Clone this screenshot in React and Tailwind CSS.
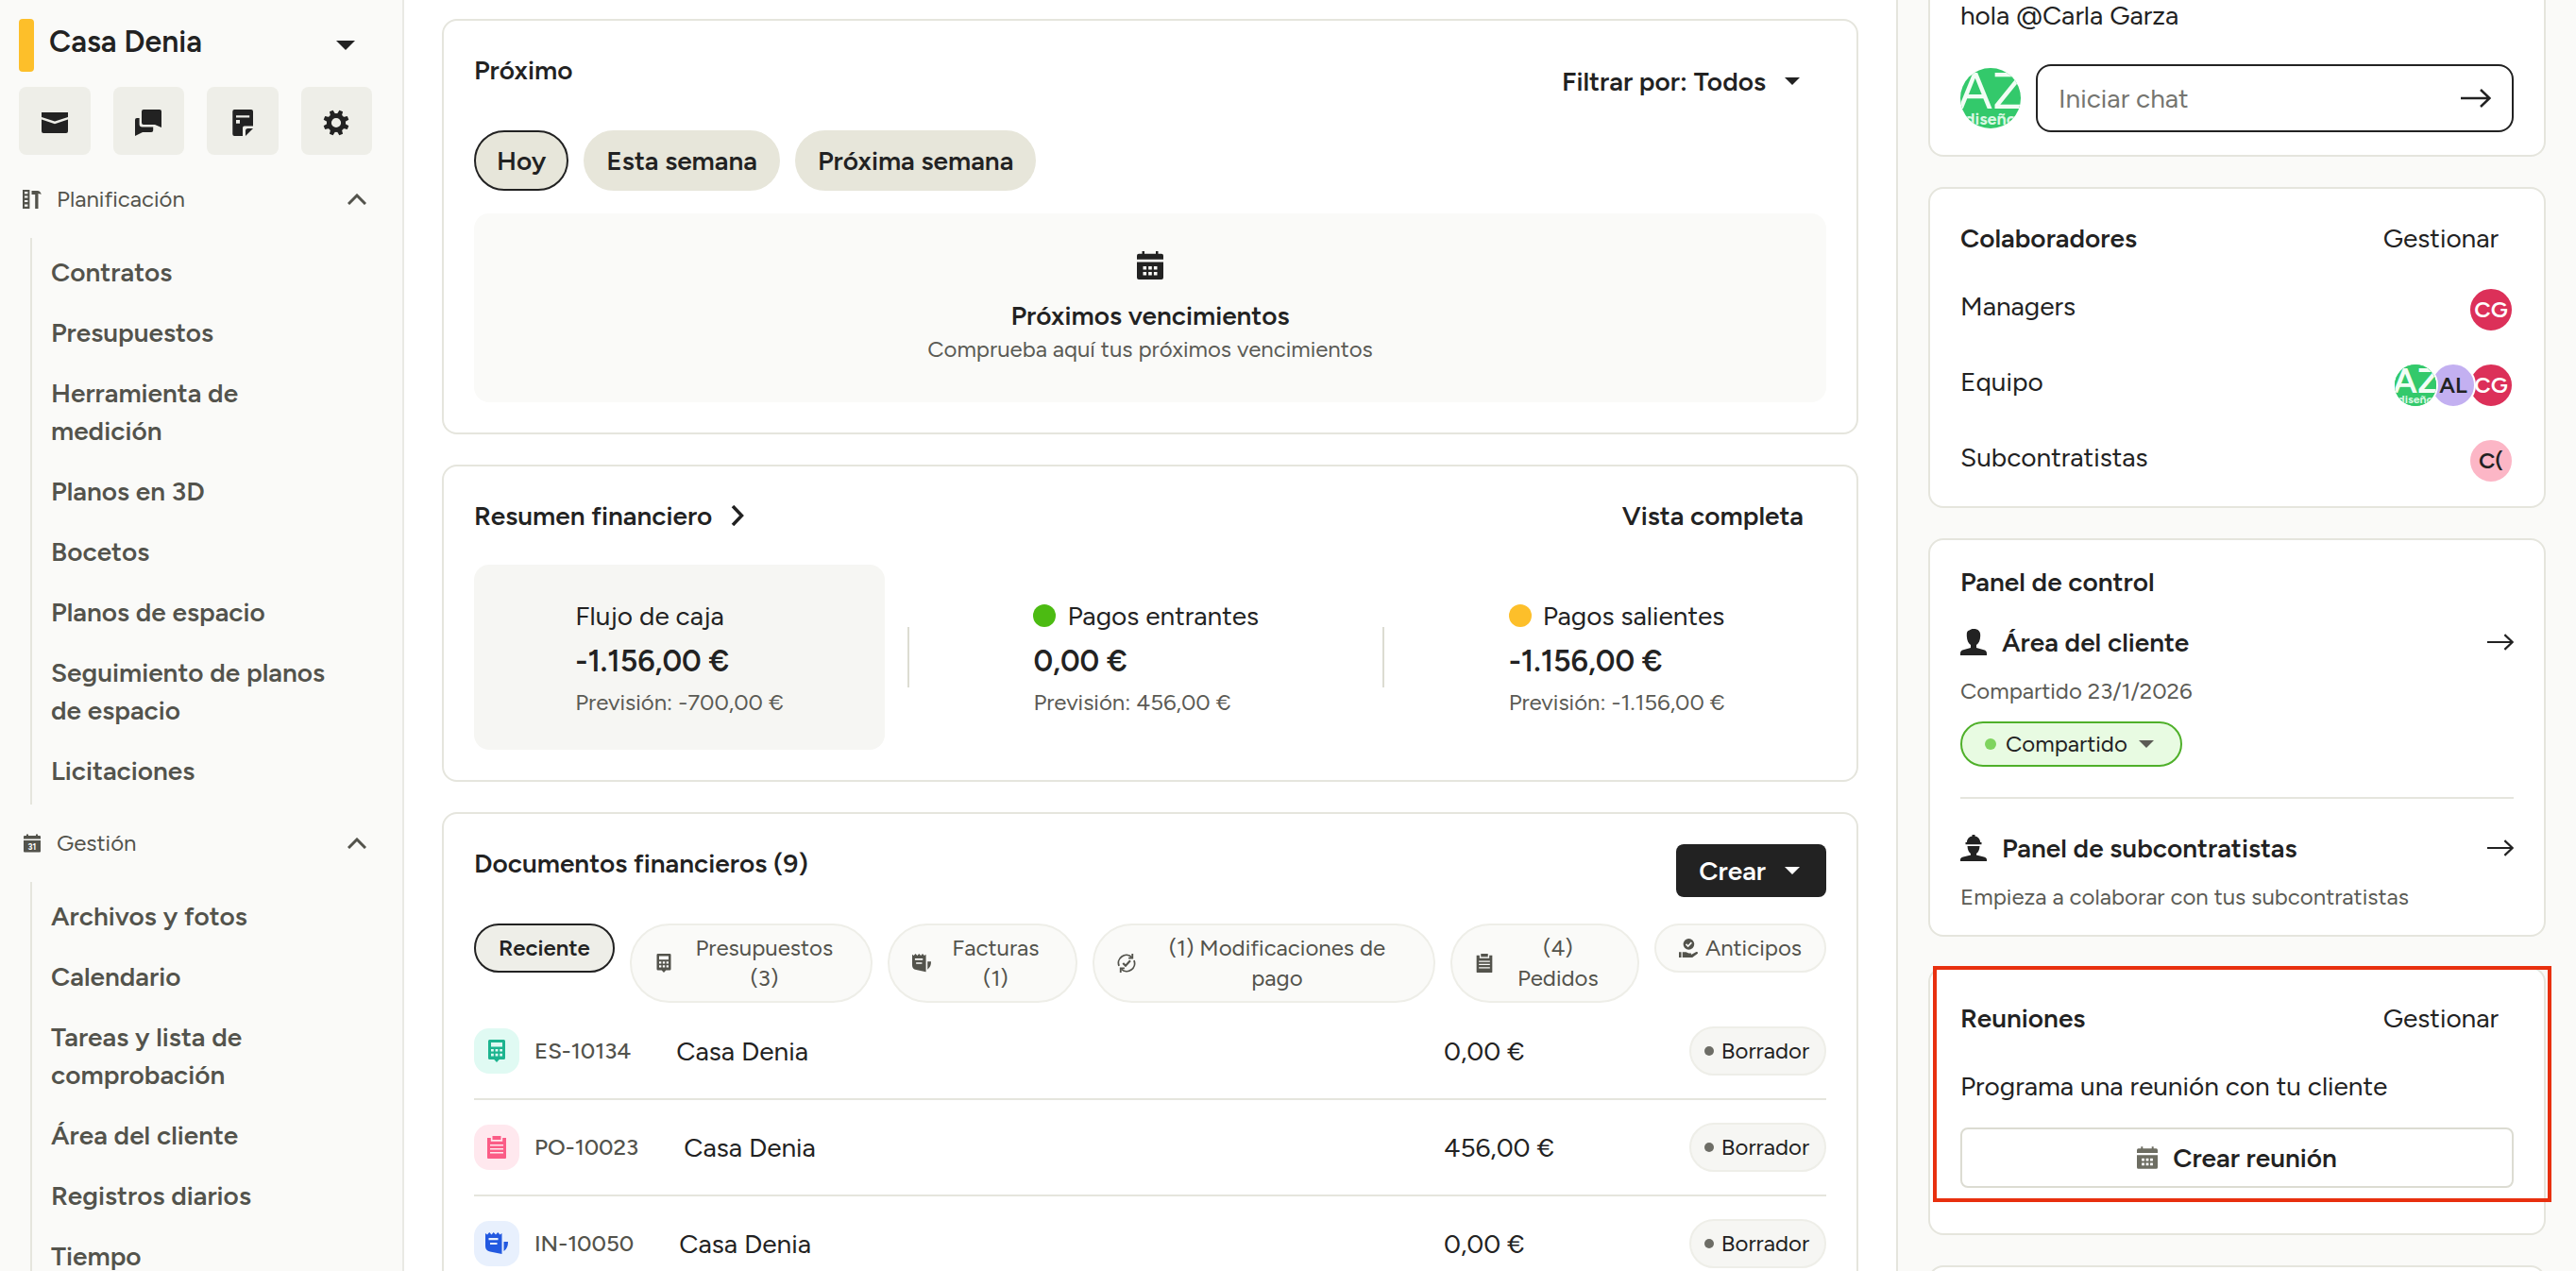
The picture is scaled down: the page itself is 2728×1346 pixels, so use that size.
import clsx from 'clsx';

// ─── Data ─────────────────────────────────────────────────────────────────────

const PLANNING = [
  'Contratos',
  'Presupuestos',
  'Herramienta de medición',
  'Planos en 3D',
  'Bocetos',
  'Planos de espacio',
  'Seguimiento de planos de espacio',
  'Licitaciones',
];

const MANAGEMENT = [
  'Archivos y fotos',
  'Calendario',
  'Tareas y lista de comprobación',
  'Área del cliente',
  'Registros diarios',
  'Tiempo',
];

const FINANCES = [
  { label: 'Flujo de caja', value: '-1.156,00 €', forecast: '-700,00 €', active: true },
  { label: 'Pagos entrantes', value: '0,00 €', forecast: '456,00 €', dot: 'bg-[#4cbb12]' },
  { label: 'Pagos salientes', value: '-1.156,00 €', forecast: '-1.156,00 €', dot: 'bg-[#fdbf2a]' },
];

// ─── Icons ────────────────────────────────────────────────────────────────────

const MailIcon = () => (
  <svg viewBox="0 0 28 28" className="size-7" fill="currentColor">
    <path d="M0 3h28v5l-14 4.4L0 8z" />
    <path d="M0 10.6l14 4.6 14-4.6V23a2 2 0 0 1-2 2H2a2 2 0 0 1-2-2z" />
  </svg>
);

const ChatIcon = () => (
  <svg viewBox="0 0 28 28" className="size-7" fill="currentColor">
    <path d="M9 0h17a2 2 0 0 1 2 2v17l-7-3H9a2 2 0 0 1-2-2V2a2 2 0 0 1 2-2z" />
    <path d="M0 28V11a2 2 0 0 1 2-2h2.6v6.4a3 3 0 0 0 3 3h11.6V22a2 2 0 0 1-2 2H8z" />
  </svg>
);

const NoteIcon = () => (
  <svg viewBox="0 0 28 28" className="size-7" fill="currentColor">
    <path
      fillRule="evenodd"
      d="M5.3 0H23a2 2 0 0 1 2 2v15.6h-9.2a1.8 1.8 0 0 0-1.8 1.8V28H5.3a2 2 0 0 1-2-2V2a2 2 0 0 1 2-2zM7 6.2v2.2h14.2V6.2zM7 11v3.8h4V11z"
    />
    <path d="M17 28v-5.4a2.6 2.6 0 0 1 2.6-2.6H25z" />
  </svg>
);

const GearIcon = () => (
  <svg viewBox="0 0 28 28" className="size-7" fill="currentColor">
    <circle cx="14" cy="14" r="7.6" fill="none" stroke="currentColor" strokeWidth="5" />
    {[22.5, 67.5, 112.5, 157.5, 202.5, 247.5, 292.5, 337.5].map((angle) => (
      <path key={angle} d="M11.2 6L12 .4h4L16.800 6z" transform={`rotate(${angle} 14 14)`} />
    ))}
  </svg>
);

const ToolsIcon = () => (
  <svg viewBox="0 0 20 20" className="size-5" fill="currentColor">
    <path
      fillRule="evenodd"
      d="M0 0h7.400v20H0zM2 2v2.200h3.400V2zM2 6.400v2.200h3.400V6.400zM2 10.900v2.200h3.400v-2.200zM2 15.500v2.200h3.400v-2.200z"
    />
    <path d="M9.500 1h6.200c2 0 3.400 1.400 4.100 3.700l-3.300-.8V20h-3.300V5H9.500z" />
  </svg>
);

const DateIcon = () => (
  <svg viewBox="0 0 20 20" className="size-5" fill="currentColor">
    <path d="M1 3a1 1 0 0 1 1-1h2V.5h2V2h8V.5h2V2h2a1 1 0 0 1 1 1v2.500H1z" />
    <path d="M1 7h18v11.500a1 1 0 0 1-1 1H2a1 1 0 0 1-1-1z" />
    <text x="10" y="16.500" textAnchor="middle" fontSize="9" fontWeight="700" fill="#fafaf8">31</text>
  </svg>
);

const CalendarIcon = ({ className }) => (
  <svg viewBox="0 0 28 30" className={className} fill="currentColor">
    <path d="M0 4.700a2 2 0 0 1 2-2h3.500V0H8v2.700h12V0h2.500v2.700H26a2 2 0 0 1 2 2v4H0z" />
    <path
      fillRule="evenodd"
      d="M0 11.600h28V28a2 2 0 0 1-2 2H2a2 2 0 0 1-2-2zM6.500 16v3.400h3.600V16zM12.200 16v3.400h3.600V16zM17.900 16v3.400h3.600V16zM6.500 22v3.400h3.600V22zM12.200 22v3.400h3.600V22zM17.900 22v3.400h3.600V22z"
    />
  </svg>
);

const CalculatorIcon = ({ className }) => (
  <svg viewBox="0 0 24 24" className={className} fill="currentColor">
    <path
      fillRule="evenodd"
      d="M4.500 0h15a1.500 1.500 0 0 1 1.500 1.500v18a1.500 1.500 0 0 1-1.500 1.500h-4.700L12 24l-2.800-3H4.500A1.500 1.500 0 0 1 3 19.500v-18A1.500 1.500 0 0 1 4.500 0zM6 3v4.500h12V3zM6 10v2.600h2.800V10zM10.600 10v2.600h2.800V10zM15.200 10v2.600H18V10zM6 14.800v2.600h2.800v-2.600zM10.600 14.800v2.600h2.800v-2.600zM15.200 14.800v2.600H18v-2.600z"
    />
  </svg>
);

const InvoiceIcon = ({ className }) => (
  <svg viewBox="0 0 24 24" className={className} fill="currentColor">
    <path
      fillRule="evenodd"
      d="M0 1l2 1.500L4.200 0l2.300 2.500L8.700 0 11 2.500 13.200 0l2.300 2.500L17.500 1v22L5 20.500a6 6 0 0 1-5-6zM3.500 6v2.200h10V6zM5 11v2h7.500v-2z"
    />
    <path d="M19.500 10H24c0 4-1 7.500-4.500 10z" />
  </svg>
);

const ClipboardIcon = ({ className }) => (
  <svg viewBox="0 0 24 24" className={className} fill="currentColor">
    <path d="M7.500 0h9v4h-9z" />
    <path
      fillRule="evenodd"
      d="M2 2h3.800v3.700h12.400V2H22v21a1 1 0 0 1-1 1H3a1 1 0 0 1-1-1zM5 9v1.500h14V9zM5 13v1.500h14V13zM5 17v1.500h14V17z"
    />
  </svg>
);

const RefreshCheckIcon = ({ className }) => (
  <svg viewBox="0 0 24 24" className={className} fill="none" stroke="currentColor" strokeWidth="2.200">
    <path d="M2.500 15.500A10 10 0 0 1 18.500 4.300M21.500 8.500A10 10 0 0 1 5.500 19.700" />
    <path d="M19.500 0v5.500h-5M4.500 24v-5.500h5" />
    <path d="M7.500 12l3.300 3.300 6-6.500" strokeWidth="2.600" />
  </svg>
);

const DepositIcon = ({ className }) => (
  <svg viewBox="0 0 24 24" className={className} fill="currentColor">
    <circle cx="12.500" cy="7" r="7" />
    <path d="M9 7l2.600 2.600L16 5" fill="none" stroke="#fafaf8" strokeWidth="2" />
    <path d="M0 17h3v7H0zM4.500 17H9l3.500 1.500h3v2l6-3.500c2-.8 3.300.8 2 2.200L17 24H4.500z" />
  </svg>
);

const PersonIcon = () => (
  <svg viewBox="0 0 28 28" className="size-7" fill="currentColor">
    <path d="M14 0c5 0 7.500 2.600 7.200 7.500C21 12 19.500 15.500 17 17v3l8 2.200c2.200.6 3 2 3 4V28H0v-1.800c0-2 .8-3.400 3-4L11 20v-3C8.500 15.500 7 12 6.800 7.500 6.600 3.500 7.500 1.800 9.500 1.600 10.500.6 12 0 14 0z" />
  </svg>
);

const BuilderIcon = () => (
  <svg viewBox="0 0 28 28" className="size-7" fill="currentColor">
    <path d="M12.500 0h3v1.500c3.500.7 5.500 3.200 5.700 6.500h1.300v2.200h-17V8h1.300c.2-3.300 2.200-5.800 5.700-6.500z" />
    <path d="M7.500 12h13c-.2 4-1.500 6.500-3.500 8v1.500l8 2c2.200.6 3 1.500 3 3V28H0v-1.500c0-1.500.8-2.400 3-3l8-2V20c-2-1.500-3.300-4-3.500-8z" />
  </svg>
);

const Caret = ({ className }) => (
  <svg viewBox="0 0 16 8" className={className} fill="currentColor">
    <path d="M0 0h16L8 8z" />
  </svg>
);

const ChevronUp = () => (
  <svg viewBox="0 0 20 12" className="h-3 w-5 shrink-0" fill="none" stroke="currentColor" strokeWidth="3">
    <path d="M1 11l9-9 9 9" />
  </svg>
);

const Arrow = ({ className }) => (
  <svg viewBox="0 0 32 20" className={className} fill="none" stroke="currentColor" strokeWidth="2.500">
    <path d="M0 10h30M21 1l9.500 9-9.500 9" />
  </svg>
);

const StudioLogo = ({ className }) => (
  <svg viewBox="0 0 64 64" className={className}>
    <rect width="64" height="64" fill="#33c96b" />
    <text x="33" y="43" textAnchor="middle" fontSize="54" fill="#f2fdf5">AZ</text>
    <text x="32" y="60" textAnchor="middle" fontSize="18" fontWeight="700" fill="#d8f7e2">diseño</text>
  </svg>
);

// ─── Shared pieces ────────────────────────────────────────────────────────────

const Card = ({ className, children }) => (
  <section className={clsx('rounded-2xl border-2 border-[#e5e5dd] bg-white px-8', className)}>
    {children}
  </section>
);

const CardTitle = ({ children }) => <h2 className="text-[28px] leading-10 font-semibold">{children}</h2>;

const Avatar = ({ initials, className }) => (
  <span
    className={clsx(
      'relative flex size-12 items-center justify-center overflow-hidden rounded-full border-2 border-white text-2xl font-semibold',
      className
    )}
  >
    {initials ?? <StudioLogo className="size-11 shrink-0" />}
  </span>
);

// ─── Sidebar ──────────────────────────────────────────────────────────────────

const NavSection = ({ icon, title, items }) => (
  <div className="text-[#53534c]">
    <button className="flex h-[82px] w-full items-center pr-1.5 pl-1 text-left text-2xl">
      {icon}
      <span className="ml-4 flex-1">{title}</span>
      <ChevronUp />
    </button>
    <ul className="ml-3 border-l-2 border-[#e5e5dd] py-1">
      {items.map((item) => (
        <li key={item}>
          <a href="#" className="block py-3 pr-8 pl-5 text-[28px] leading-10 font-semibold">
            {item}
          </a>
        </li>
      ))}
    </ul>
  </div>
);

const Sidebar = () => (
  <nav className="w-[428px] shrink-0 overflow-hidden border-r-2 border-[#e9e9e4] bg-[#fafaf8] pt-5 pr-8 pl-5">
    <button className="flex w-full items-center pr-[18px] text-left">
      <span className="h-14 w-4 rounded-sm bg-[#fdbf2a]" />
      <span className="ml-4 flex-1 pb-2 text-[32px] leading-10 font-semibold">Casa Denia</span>
      <Caret className="h-2.5 w-5" />
    </button>
    <div className="mt-4 mb-1.5 grid grid-cols-4 gap-6">
      {[MailIcon, ChatIcon, NoteIcon, GearIcon].map((Icon, i) => (
        <button key={i} className="flex h-[72px] items-center justify-center rounded-lg bg-[#eeeee8] pt-1">
          <Icon />
        </button>
      ))}
    </div>
    <NavSection icon={<ToolsIcon />} title="Planificación" items={PLANNING} />
    <NavSection icon={<DateIcon />} title="Gestión" items={MANAGEMENT} />
  </nav>
);

// ─── Main column ──────────────────────────────────────────────────────────────

const Upcoming = () => (
  <Card className="pt-8 pb-8">
    <div className="flex items-start justify-between">
      <CardTitle>Próximo</CardTitle>
      <button className="mt-1 flex h-14 items-center gap-5 pr-7 text-[28px] font-semibold">
        Filtrar por: Todos
        <Caret className="h-2 w-4" />
      </button>
    </div>
    <div className="mt-6 flex gap-4">
      {['Hoy', 'Esta semana', 'Próxima semana'].map((label, i) => (
        <button
          key={label}
          className={clsx(
            'h-16 rounded-full border-2 bg-[#e7e6da] px-[22px] text-[28px] font-semibold',
            i === 0 ? 'border-[#222]' : 'border-[#e7e6da]'
          )}
        >
          {label}
        </button>
      ))}
    </div>
    <div className="mt-6 flex h-[200px] flex-col items-center rounded-2xl bg-[#fafaf8] pt-10">
      <CalendarIcon className="h-[30px] w-7" />
      <p className="mt-5 text-[28px] leading-9 font-semibold">Próximos vencimientos</p>
      <p className="text-2xl leading-9 text-[#5b5b55]">Comprueba aquí tus próximos vencimientos</p>
    </div>
  </Card>
);

const FinanceSummary = () => (
  <Card className="pt-8 pb-8">
    <div className="flex items-center justify-between">
      <a href="#" className="flex items-center gap-5">
        <CardTitle>Resumen financiero</CardTitle>
        <svg viewBox="0 0 14 22" className="h-[22px] w-3.5" fill="none" stroke="currentColor" strokeWidth="3.500">
          <path d="M2 1l9.500 10L2 21" />
        </svg>
      </a>
      <a href="#" className="px-6 text-[28px] leading-10 font-semibold">Vista completa</a>
    </div>
    <div className="mt-8 flex items-center">
      {FINANCES.map((item, i) => (
        <div key={item.label} className="contents">
          {i > 0 && <div className="mx-6 h-16 w-0.5 bg-[#dcdcd2]" />}
          <div
            className={clsx(
              'flex h-[196px] flex-auto flex-col items-center justify-center rounded-2xl',
              item.active && 'bg-[#f6f6f3]'
            )}
          >
            <div>
              <p className="flex items-center gap-3 text-[28px] leading-12">
                {item.dot && <span className={clsx('size-6 rounded-full', item.dot)} />}
                {item.label}
              </p>
              <p className="text-[32px] leading-12 font-semibold">{item.value}</p>
              <p className="text-2xl leading-10 text-[#5b5b55]">Previsión: {item.forecast}</p>
            </div>
          </div>
        </div>
      ))}
    </div>
  </Card>
);

const TABS = [
  { icon: CalculatorIcon, lines: ['Presupuestos', '(3)'], width: 'basis-[257px]' },
  { icon: InvoiceIcon, lines: ['Facturas', '(1)'], width: 'basis-[201px]' },
  { icon: RefreshCheckIcon, lines: ['(1) Modificaciones de', 'pago'], width: 'basis-[363px]' },
  { icon: ClipboardIcon, lines: ['(4)', 'Pedidos'], width: 'basis-[200px]' },
  { icon: DepositIcon, lines: ['Anticipos'], width: 'basis-[182px]' },
];

const DOCUMENTS = [
  { code: 'ES-10134', amount: '0,00 €', icon: CalculatorIcon, tile: 'bg-[#e0faf3] text-[#1cb48f]' },
  { code: 'PO-10023', amount: '456,00 €', icon: ClipboardIcon, tile: 'bg-[#ffe8ee] text-[#fb5c86]' },
  { code: 'IN-10050', amount: '0,00 €', icon: InvoiceIcon, tile: 'bg-[#e8f0fd] text-[#2359e0]' },
];

const Documents = () => (
  <Card className="pt-8">
    <div className="flex items-start justify-between">
      <CardTitle>Documentos financieros (9)</CardTitle>
      <button className="flex h-14 items-center gap-5 rounded-lg bg-[#222] pr-7 pl-6 text-[28px] font-semibold text-white">
        Crear
        <Caret className="h-2 w-4" />
      </button>
    </div>
    <div className="mt-7 flex items-start gap-4 text-2xl leading-8">
      <button className="shrink-0 rounded-full border-2 border-[#222] bg-[#eeeee8] px-6 py-2 font-semibold">
        Reciente
      </button>
      {TABS.map(({ icon: Icon, lines, width }) => (
        <button
          key={lines[0]}
          className={clsx(
            'flex grow items-center gap-2 rounded-[42px] border-2 border-[#eeeee8] bg-[#fafaf8] px-6 py-2 text-[#53534c]',
            width
          )}
        >
          <Icon className="size-5 shrink-0" />
          <span className="flex-1 whitespace-nowrap">
            {lines.map((line) => (
              <span key={line} className="block">{line}</span>
            ))}
          </span>
        </button>
      ))}
    </div>
    <table className="w-full table-fixed">
      <tbody>
        {DOCUMENTS.map(({ code, amount, icon: Icon, tile }) => (
          <tr key={code} className="h-[102px] border-b-2 border-[#e5e5dd]">
            <td className="p-0">
              <div className="flex items-center">
                <span className={clsx('flex size-12 items-center justify-center rounded-2xl', tile)}>
                  <Icon className="size-6" />
                </span>
                <a href="#" className="ml-4 text-2xl font-medium text-[#53534c]">{code}</a>
                <span className="ml-12 text-[28px]">Casa Denia</span>
              </div>
            </td>
            <td className="w-[205px] p-0 text-[28px]">{amount}</td>
            <td className="w-[200px] p-0">
              <span className="ml-auto flex h-[52px] w-fit items-center gap-2 rounded-full border-2 border-[#eeeee8] bg-[#f6f6f3] pr-4 pl-3.5 text-2xl">
                <span className="size-2.5 rounded-full bg-[#6d6d66]" />
                Borrador
              </span>
            </td>
          </tr>
        ))}
      </tbody>
    </table>
  </Card>
);

// ─── Right column ─────────────────────────────────────────────────────────────

const Chat = () => (
  <Card className="rounded-t-none border-t-0 pb-6">
    <p className="pb-9 text-[28px] leading-8">hola @Carla Garza</p>
    <form className="flex items-center gap-4">
      <StudioLogo className="size-16 shrink-0 rounded-full" />
      <div className="flex h-[72px] flex-1 items-center rounded-2xl border-2 border-[#222] px-[22px]">
        <input
          aria-label="Iniciar chat"
          placeholder="Iniciar chat"
          className="min-w-0 flex-1 text-[28px] outline-none placeholder:text-[#757570]"
        />
        <button type="button" aria-label="Enviar">
          <Arrow className="h-5 w-8" />
        </button>
      </div>
    </form>
  </Card>
);

const TitleRow = ({ title }) => (
  <div className="flex items-center justify-between pr-4">
    <CardTitle>{title}</CardTitle>
    <a href="#" className="text-[28px] leading-10">Gestionar</a>
  </div>
);

const PeopleRow = ({ label, children }) => (
  <div className="flex h-12 items-center justify-between">
    <span className="pb-2 text-[28px]">{label}</span>
    <div className="flex -space-x-2">{children}</div>
  </div>
);

const Collaborators = () => (
  <Card className="pt-8 pb-6">
    <TitleRow title="Colaboradores" />
    <div className="mt-8 flex flex-col gap-8">
      <PeopleRow label="Managers">
        <Avatar initials="CG" className="bg-[#dc3059] text-white" />
      </PeopleRow>
      <PeopleRow label="Equipo">
        <Avatar className="z-20 bg-[#33c96b]" />
        <Avatar initials="AL" className="z-10 bg-[#c3b0f1]" />
        <Avatar initials="CG" className="bg-[#dc3059] text-white" />
      </PeopleRow>
      <PeopleRow label="Subcontratistas">
        <Avatar initials="C(" className="bg-[#fcb6c6]" />
      </PeopleRow>
    </div>
  </Card>
);

const PanelLink = ({ icon, label }) => (
  <a href="#" className="flex items-center text-[28px] leading-10 font-semibold">
    {icon}
    <span className="ml-4 flex-1">{label}</span>
    <Arrow className="h-[18px] w-7" />
  </a>
);

const ControlPanel = () => (
  <Card className="pt-6 pb-5">
    <CardTitle>Panel de control</CardTitle>
    <div className="mt-6">
      <PanelLink icon={<PersonIcon />} label="Área del cliente" />
    </div>
    <p className="mt-3 text-2xl leading-10 text-[#5b5b55]">Compartido 23/1/2026</p>
    <button className="mt-3 flex h-12 items-center gap-2.5 rounded-full border-2 border-[#4fb02a] bg-[#e8fbe2] pr-7 pl-6 text-2xl">
      <span className="size-3 rounded-full bg-[#7fd45f]" />
      Compartido
      <Caret className="ml-0.5 h-2 w-4 text-[#5b5b55]" />
    </button>
    <hr className="mt-8 mb-8 border-t-2 border-[#e5e5dd]" />
    <PanelLink icon={<BuilderIcon />} label="Panel de subcontratistas" />
    <p className="mt-3 text-2xl leading-10 text-[#5b5b55]">Empieza a colaborar con tus subcontratistas</p>
  </Card>
);

const Meetings = () => (
  <div className="relative">
    <Card className="pt-8 pb-12">
      <TitleRow title="Reuniones" />
      <p className="mt-8 text-[28px] leading-10">Programa una reunión con tu cliente</p>
      <button className="mt-6 flex h-16 w-full items-center justify-center gap-4 rounded-lg border-2 border-[#dcdcd2] text-[28px] font-semibold">
        <CalendarIcon className="h-6 w-[22px] text-[#6d6d62]" />
        Crear reunión
      </button>
    </Card>
    {/* Highlight frame over the card */}
    <div className="pointer-events-none absolute -top-px -right-1.5 bottom-[35px] left-[5px] border-4 border-[#e8300f]" />
  </div>
);

// ─── Page ─────────────────────────────────────────────────────────────────────

const App = () => (
  <div className="flex h-screen overflow-hidden bg-white font-['Figtree','Lato',sans-serif] text-[#222]">
    <Sidebar />
    <main className="flex min-w-0 flex-1 flex-col gap-8 px-10 pt-5 *:shrink-0">
      <Upcoming />
      <FinanceSummary />
      <Documents />
    </main>
    <aside className="flex w-[720px] shrink-0 flex-col gap-8 border-l-2 border-[#e5e5dd] bg-[#fafaf8] px-8 *:shrink-0">
      <Chat />
      <Collaborators />
      <ControlPanel />
      <Meetings />
      <Card className="h-40" />
    </aside>
  </div>
);

export default App;
